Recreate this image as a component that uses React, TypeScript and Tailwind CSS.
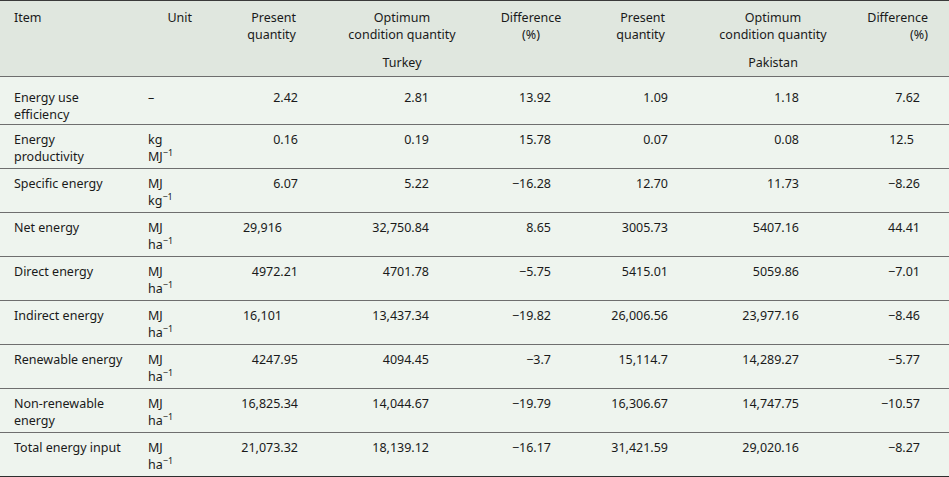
import React from "react"

type Row = {
  item: [string, string?]
  unit: [string, string?, string?] // first line, second line base, superscript
  values: string[]
}

const rows: Row[] = [
  { item: ["Energy use", "efficiency"], unit: ["–"], values: ["2.42", "2.81", "13.92", "1.09", "1.18", "7.62"] },
  { item: ["Energy", "productivity"], unit: ["kg", "MJ", "−1"], values: ["0.16", "0.19", "15.78", "0.07", "0.08", "12.5"] },
  { item: ["Specific energy"], unit: ["MJ", "kg", "−1"], values: ["6.07", "5.22", "−16.28", "12.70", "11.73", "−8.26"] },
  { item: ["Net energy"], unit: ["MJ", "ha", "−1"], values: ["29,916", "32,750.84", "8.65", "3005.73", "5407.16", "44.41"] },
  { item: ["Direct energy"], unit: ["MJ", "ha", "−1"], values: ["4972.21", "4701.78", "−5.75", "5415.01", "5059.86", "−7.01"] },
  { item: ["Indirect energy"], unit: ["MJ", "ha", "−1"], values: ["16,101", "13,437.34", "−19.82", "26,006.56", "23,977.16", "−8.46"] },
  { item: ["Renewable energy"], unit: ["MJ", "ha", "−1"], values: ["4247.95", "4094.45", "−3.7", "15,114.7", "14,289.27", "−5.77"] },
  { item: ["Non-renewable", "energy"], unit: ["MJ", "ha", "−1"], values: ["16,825.34", "14,044.67", "−19.79", "16,306.67", "14,747.75", "−10.57"] },
  { item: ["Total energy input"], unit: ["MJ", "ha", "−1"], values: ["21,073.32", "18,139.12", "−16.17", "31,421.59", "29,020.16", "−8.27"] },
]

const cols = "grid grid-cols-[140px_60px_110px_170px_100px_110px_170px_89px]"

// right padding per numeric column, lines the numbers up on the right edge
const valuePad = ["pr-[12px]", "pr-[51px]", "pr-[29px]", "pr-[22px]", "pr-[61px]", "pr-[29px]"]

function padFor(v: string, col: number) {
  if (col === 0 && (v === "29,916" || v === "16,101")) return "pr-[28px]"
  if (col === 5 && v === "12.5") return "pr-[35px]"
  return valuePad[col]
}

export default function App() {
  return (
    <div className="w-[949px] bg-[#eef4ee] text-[#1a1a1a] font-['Noto_Sans',sans-serif] text-[12.5px] leading-[17px]">
      <div className={`${cols} h-[77px] bg-[#e0e7df] border-t border-b border-t-[#3a3a3a] border-b-[#6e6e6e]`}>
        <div className="pl-[14px] pt-[8px]">Item</div>
        <div className="pt-[8px] pr-[8px] text-right">Unit</div>
        <div className="pt-[8px] pr-[14px] text-right">
          Present
          <br />
          quantity
        </div>
        <div className="pt-[8px] pl-[14px] text-center">
          Optimum
          <br />
          condition quantity
          <div className="mt-[11px]">Turkey</div>
        </div>
        <div className="pt-[8px] pl-[2px] text-center">
          Difference
          <br />
          (%)
        </div>
        <div className="pt-[8px] pr-[25px] text-right">
          Present
          <br />
          quantity
        </div>
        <div className="pt-[8px] pr-[4px] text-center">
          Optimum
          <br />
          condition quantity
          <div className="mt-[11px]">Pakistan</div>
        </div>
        <div className="pt-[8px] pr-[21px] text-right">
          Difference
          <br />
          (%)
        </div>
      </div>

      {rows.map((r, i) => {
        const first = i === 0
        const last = i === rows.length - 1
        const h = first ? "h-[48px] pt-[12px]" : last ? "h-[45px] pt-[6px]" : "h-[44px] pt-[6px]"
        const border = last ? "border-b-2 border-b-[#2e2e2e]" : "border-b border-b-[#6e6e6e]"
        return (
          <div key={i} className={`${cols} ${h} ${border}`}>
            <div className="pl-[14px]">
              {r.item[0]}
              {r.item[1] && (
                <>
                  <br />
                  {r.item[1]}
                </>
              )}
            </div>
            <div className="pl-[8px]">
              {r.unit[0]}
              {r.unit[1] && (
                <>
                  <br />
                  {r.unit[1]}
                  <sup className="text-[9px] align-baseline relative -top-[5px]">{r.unit[2]}</sup>
                </>
              )}
            </div>
            {r.values.map((v, j) => (
              <div key={j} className={`text-right ${padFor(v, j)}`}>
                {v}
              </div>
            ))}
          </div>
        )
      })}
    </div>
  )
}
